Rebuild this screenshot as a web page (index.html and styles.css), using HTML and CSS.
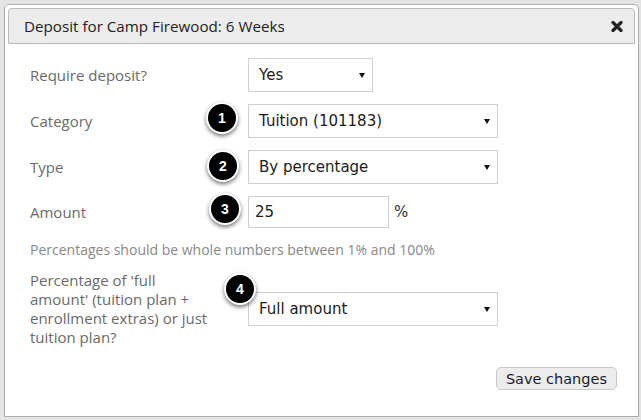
FILE: index.html
```html
<!DOCTYPE html>
<html>
<head>
<meta charset="utf-8">
<link rel="stylesheet" href="styles.css">
</head>
<body>
<div class="dialog">
  <div class="titlebar">
    <span class="title">Deposit for Camp Firewood: 6 Weeks</span>
    <svg class="close" width="12" height="11" viewBox="0 0 12 11"><path d="M2 1.5 L10 9.5 M10 1.5 L2 9.5" stroke="#222" stroke-width="3.2" stroke-linecap="round"/></svg>
  </div>
  <div class="content">
    <div class="row">
      <label class="label">Require deposit?</label>
      <div class="control">
        <div class="select short"><span>Yes</span><i class="arrow"></i></div>
      </div>
    </div>
    <div class="row">
      <label class="label">Category</label>
      <div class="control">
        <span class="badge b1">1</span>
        <div class="select wide"><span>Tuition (101183)</span><i class="arrow"></i></div>
      </div>
    </div>
    <div class="row">
      <label class="label">Type</label>
      <div class="control">
        <span class="badge b2">2</span>
        <div class="select wide"><span>By percentage</span><i class="arrow"></i></div>
      </div>
    </div>
    <div class="row row-amount">
      <label class="label">Amount</label>
      <div class="control inline">
        <span class="badge b3">3</span>
        <div class="input">25</div>
        <span class="unit">%</span>
      </div>
    </div>
    <p class="help">Percentages should be whole numbers between 1% and 100%</p>
    <div class="row row-last">
      <label class="label multi">Percentage of 'full amount' (tuition plan + enrollment extras) or just tuition plan?</label>
      <div class="control">
        <span class="badge b4">4</span>
        <div class="select wide"><span>Full amount</span><i class="arrow"></i></div>
      </div>
    </div>
    <div class="footer">
      <button class="btn">Save changes</button>
    </div>
  </div>
</div>
</body>
</html>
```
FILE: styles.css
```css
html, body {
  margin: 0;
  padding: 0;
}
body {
  background: #e4e4e4;
  width: 641px;
  height: 420px;
  overflow: hidden;
  font-family: "Open Sans", "DejaVu Sans", sans-serif;
}
.dialog {
  margin: 4px 0 0 4px;
  width: 627px;
  height: 405px;
  background: #fff;
  border: 1px solid #ababab;
  border-radius: 5px 5px 0 0;
  padding: 3px;
  display: flex;
  flex-direction: column;
}
.titlebar {
  height: 34px;
  border: 1px solid #bcbcbc;
  border-radius: 4px 4px 0 0;
  background: #ececec;
  display: flex;
  align-items: center;
  justify-content: space-between;
  padding: 0 11px 0 15px;
}
.title {
  font-size: 15.2px;
  color: #222;
}
.close {
  display: block;
  margin-top: 1px;
}
.content {
  padding: 14px 18px 0 22px;
  position: relative;
}
.row {
  display: grid;
  grid-template-columns: 218px auto;
  align-items: center;
  margin-bottom: 12px;
}
.row-amount {
  margin-bottom: 13px;
}
.label {
  font-size: 15px;
  color: #6a6a6a;
}
.label.multi {
  line-height: 19px;
  width: 182px;
}
.control {
  position: relative;
}
.control.inline {
  display: flex;
  align-items: center;
}
.select {
  box-sizing: border-box;
  height: 34px;
  border: 1px solid #cfcfcf;
  background: #fff;
  display: flex;
  align-items: center;
  justify-content: space-between;
  padding: 0 7px 0 10px;
  font-family: "DejaVu Sans", sans-serif;
  font-size: 15px;
  color: #1c1c1c;
}
.select.short {
  width: 125px;
}
.select.wide {
  width: 250px;
}
.arrow {
  width: 0;
  height: 0;
  border-left: 3px solid transparent;
  border-right: 3px solid transparent;
  border-top: 5px solid #111;
  margin-top: 1px;
}
.input {
  box-sizing: border-box;
  width: 141px;
  height: 32px;
  border: 1px solid #cfcfcf;
  padding: 0 6px;
  display: flex;
  align-items: center;
  font-family: "DejaVu Sans", sans-serif;
  font-size: 15px;
  color: #1c1c1c;
}
.unit {
  margin-left: 5px;
  font-family: "DejaVu Sans", sans-serif;
  font-size: 15px;
  color: #333;
}
.help {
  margin: 0 0 12px;
  font-size: 14px;
  line-height: 18px;
  color: #888;
}
.badge {
  position: absolute;
  box-sizing: border-box;
  width: 32px;
  height: 32px;
  border-radius: 50%;
  background: #000;
  border: 2px solid #fff;
  box-shadow: 0 2px 4px rgba(0, 0, 0, 0.55);
  color: #fff;
  font-family: "Liberation Sans", Arial, sans-serif;
  font-weight: bold;
  font-size: 14px;
  display: flex;
  align-items: center;
  justify-content: center;
}
.b1 { left: -42px; top: -2px; }
.b2 { left: -41px; top: 0; }
.b3 { left: -39px; top: -3px; }
.b4 { left: -24px; top: -19px; }
.footer {
  display: flex;
  justify-content: flex-end;
  margin-top: 20px;
}
.btn {
  height: 23px;
  padding: 0 9px;
  border: 1px solid #c8c8c8;
  border-radius: 5px;
  background: #ececec;
  font-family: "DejaVu Sans", sans-serif;
  font-size: 14.5px;
  line-height: 20px;
  color: #1a1a33;
}
```
